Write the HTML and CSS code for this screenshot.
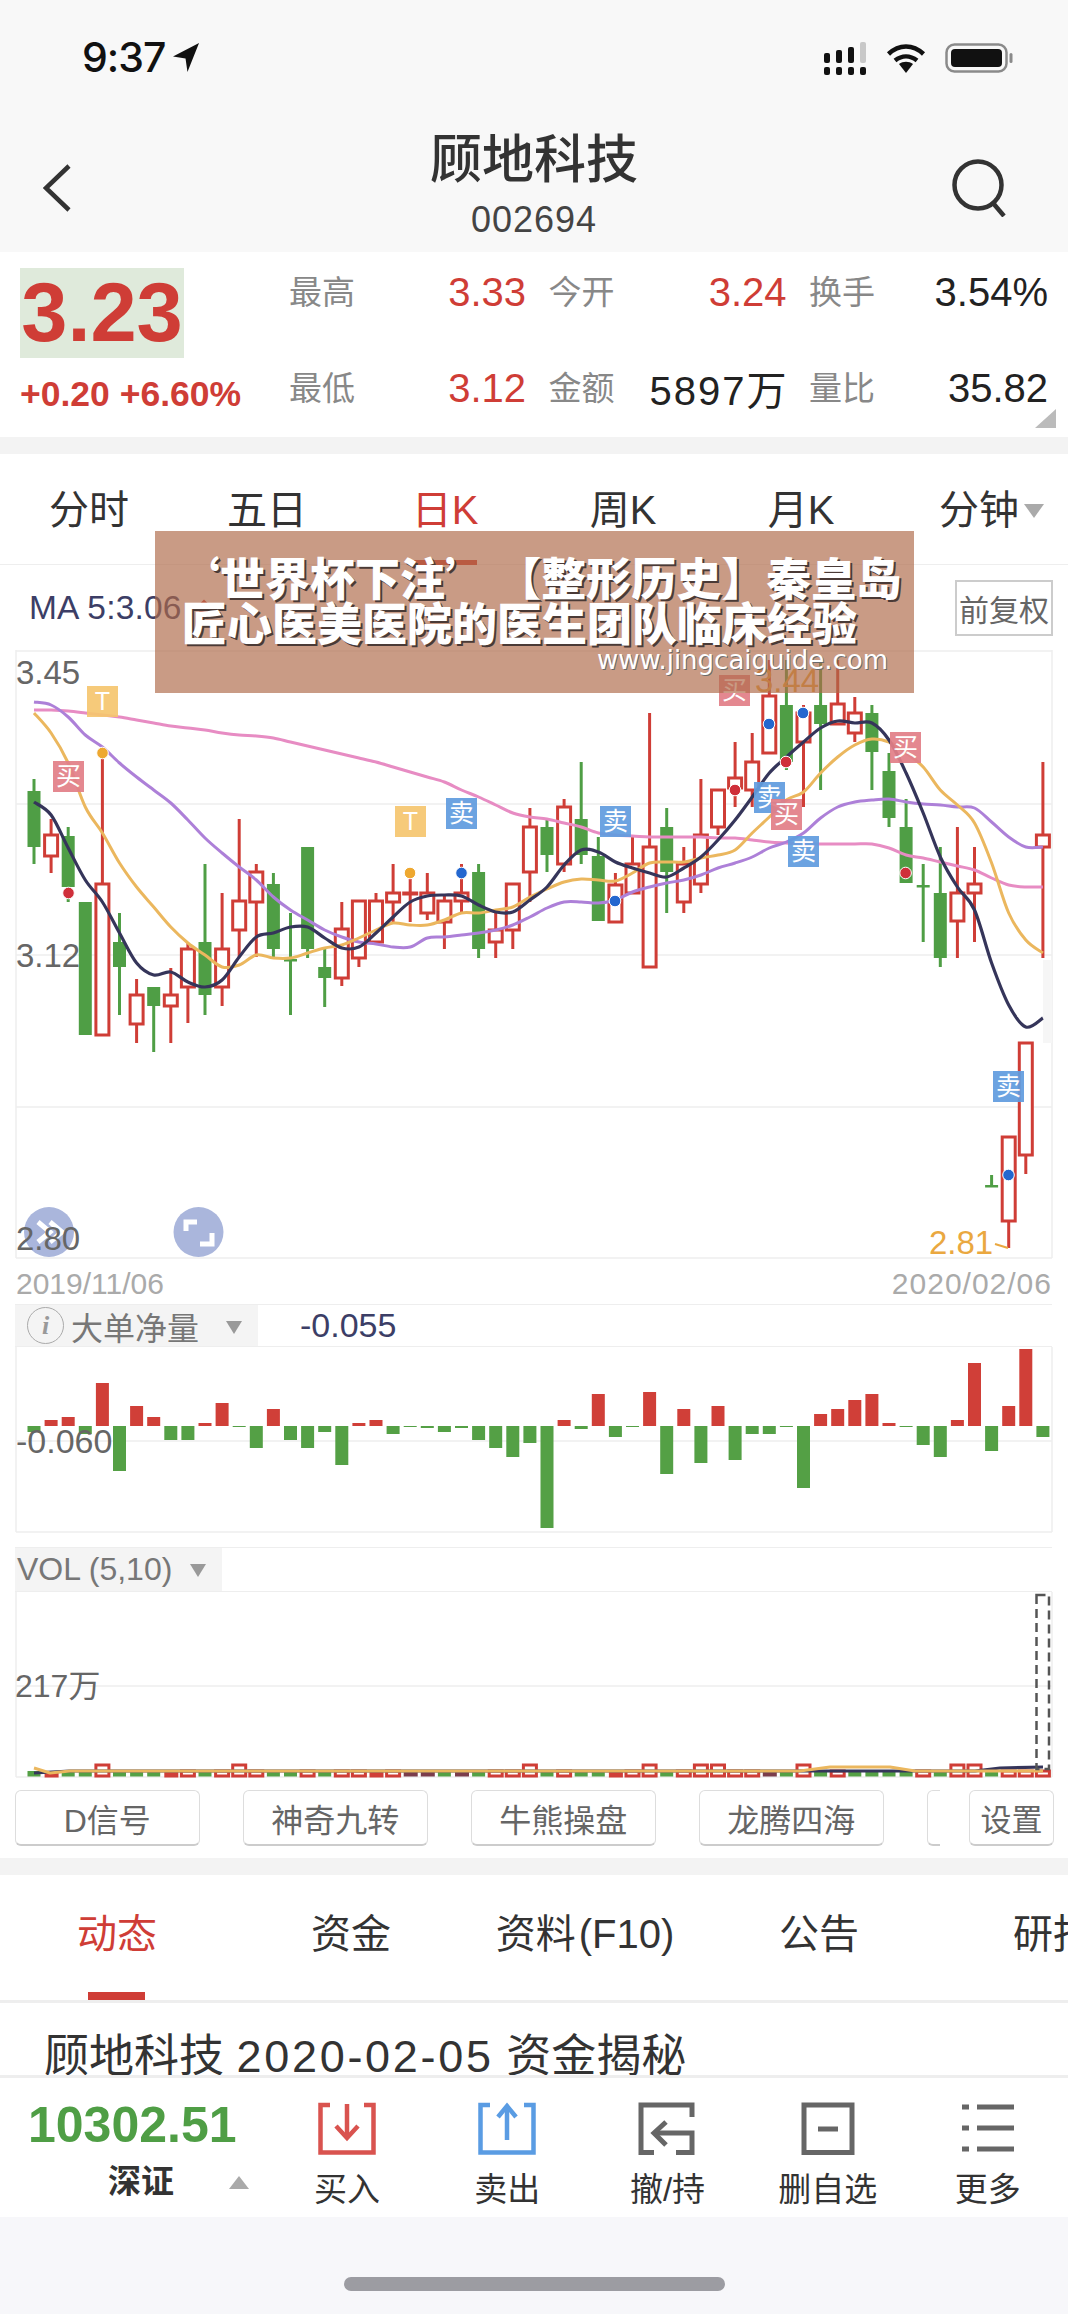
FILE: index.html
```html
<!DOCTYPE html>
<html lang="zh-CN">
<head>
<meta charset="utf-8">
<title>顾地科技</title>
<link rel="stylesheet" href="styles.css">
</head>
<body>
<div class="app">
  <header class="status">
    <div class="clock"><span>9:37</span>
      <svg class="loc" viewBox="0 0 28 30"><path d="M27 0L0 14L13 16L15 30Z"/></svg>
    </div>
    <div class="status-icons">
      <svg class="signal" viewBox="0 0 45 33">
        <g class="sig-on">
          <rect x="0" y="25" width="6" height="8" rx="2"/><rect x="12" y="25" width="6" height="8" rx="2"/><rect x="24" y="25" width="6" height="8" rx="2"/><rect x="36" y="25" width="6" height="8" rx="2"/>
          <rect x="0" y="11" width="6" height="10" rx="2"/><rect x="12" y="8" width="6" height="13" rx="2"/><rect x="24" y="5" width="6" height="16" rx="2"/>
        </g>
        <rect class="sig-off" x="36" y="0" width="6" height="21" rx="2"/>
      </svg>
      <svg class="wifi" viewBox="0 0 40 30">
        <path class="wifi-arc" d="M2.5 11C13 1 27 1 37.500 11"/>
        <path class="wifi-arc" d="M9 17.500C16 12 24 12 31 17.500"/>
        <path class="wifi-dot" d="M13 21C17 18 23 18 27 21L20 30Z"/>
      </svg>
      <svg class="battery" viewBox="0 0 68 30">
        <rect class="batt-shell" x="1.500" y="1.500" width="60" height="27" rx="8"/>
        <rect class="batt-fill" x="6" y="6" width="51" height="18" rx="4"/>
        <rect class="batt-nub" x="64.500" y="10" width="3" height="10" rx="1.500"/>
      </svg>
    </div>
  </header>

  <nav class="nav">
    <svg class="back" viewBox="0 0 28 48"><path d="M26 2L3 24L26 46"/></svg>
    <div class="nav-title">
      <h1>顾地科技</h1>
      <div class="code">002694</div>
    </div>
    <svg class="search" viewBox="0 0 54 58"><circle cx="26" cy="26" r="23.500"/><path d="M41 44L52 57"/></svg>
  </nav>

  <section class="quote">
    <div class="price-col">
      <div class="price-box">3.23</div>
      <div class="change">+0.20 +6.60%</div>
    </div>
    <div class="stats">
      <div class="stat"><span class="stat-label">最高</span><span class="stat-value up">3.33</span></div>
      <div class="stat"><span class="stat-label">今开</span><span class="stat-value up">3.24</span></div>
      <div class="stat"><span class="stat-label">换手</span><span class="stat-value">3.54%</span></div>
      <div class="stat"><span class="stat-label">最低</span><span class="stat-value up">3.12</span></div>
      <div class="stat"><span class="stat-label">金额</span><span class="stat-value spaced">5897万</span></div>
      <div class="stat"><span class="stat-label">量比</span><span class="stat-value">35.82</span></div>
    </div>
    <span class="corner"></span>
  </section>
  <div class="gap"></div>

  <div class="period-tabs">
    <div class="period">分时</div>
    <div class="period">五日</div>
    <div class="period active">日K</div>
    <div class="period">周K</div>
    <div class="period">月K</div>
    <div class="period more">分钟</div>
  </div>

  <div class="ma-row">
    <div class="ma-text">MA 5:3.06<i class="ma-diamond"></i></div>
    <div class="adjust">前复权</div>
  </div>

  <svg class="kline" id="kline" viewBox="0 650 1068 654" width="1068" height="654">
    <g id="kline-grid"></g>
    <g id="kline-candles"></g>
    <g id="kline-lines"></g>
    <g id="kline-marks"></g>
    <text class="axis" x="16" y="684">3.45</text>
    <text class="axis" x="16" y="967">3.12</text>
    <text class="hi-lo" x="755" y="692">3.44</text>
    <text class="hi-lo" x="929" y="1254">2.81</text>
    <path class="lo-tick" d="M995 1244L1008 1248"/>
    <circle class="fab" cx="49" cy="1232" r="25"/>
    <path class="fab-ico" d="M38 1222L50 1232L38 1242M50 1222L62 1232L50 1242"/>
    <circle class="fab" cx="198.500" cy="1232" r="25"/>
    <path class="fab-ico" d="M186 1231V1222H197M212 1233V1244H200"/>
    <text class="axis" x="16" y="1250">2.80</text>
    <text class="date" x="16" y="1294">2019/11/06</text>
    <text class="date end" x="1052" y="1294">2020/02/06</text>
  </svg>

  <div class="pane-head">
    <div class="pane-tab wide">
      <span class="info">i</span><span>大单净量</span><i class="caret"></i>
    </div>
    <span class="pane-value">-0.055</span>
  </div>
  <svg class="flow-bars" id="flow" viewBox="0 1347 1068 200" width="1068" height="200">
    <g id="flow-grid"></g>
    <g id="flow-bars"></g>
    <text class="axis big" x="16" y="1453">-0.060</text>
  </svg>

  <div class="pane-head vol-head">
    <div class="pane-tab narrow"><span>VOL (5,10)</span><i class="caret"></i></div>
  </div>
  <svg class="vol" id="vol" viewBox="0 1592 1068 198" width="1068" height="198">
    <g id="vol-grid"></g>
    <g id="vol-bars"></g>
    <text class="axis small" x="15" y="1697">217万</text>
  </svg>

  <div class="tools">
    <div class="tool-scroll">
      <div class="tool">D信号</div>
      <div class="tool">神奇九转</div>
      <div class="tool">牛熊操盘</div>
      <div class="tool">龙腾四海</div>
      <div class="tool"></div>
    </div>
    <div class="tool settings">设置</div>
  </div>
  <div class="gap"></div>

  <div class="news-tabs">
    <div class="news-tab active">动态</div>
    <div class="news-tab">资金</div>
    <div class="news-tab tight">资料 (F10)</div>
    <div class="news-tab">公告</div>
    <div class="news-tab">研报</div>
  </div>
  <div class="news-title">顾地科技 <span class="news-date">2020-02-05</span> 资金揭秘</div>

  <footer class="footer">
    <div class="index">
      <div class="index-value">10302.51</div>
      <div class="index-name"><span>深证</span><i class="index-up"></i></div>
    </div>
    <div class="action">
      <svg class="act-ico buy" viewBox="0 0 58 53"><path d="M12 3H2.500V50.500H55.500V3H46"/><path d="M29 2V35"/><path d="M18 24L29 36L40 24"/></svg>
      <span>买入</span>
    </div>
    <div class="action">
      <svg class="act-ico sell" viewBox="0 0 58 53"><path d="M12 3H2.500V50.500H55.500V3H46"/><path d="M29 38V5"/><path d="M20 15L29 4L38 15"/></svg>
      <span>卖出</span>
    </div>
    <div class="action">
      <svg class="act-ico hold" viewBox="0 0 58 53"><path d="M54 15V3H3V50.500H16"/><path d="M38 50.500H54V31H17"/><path d="M28 20L16 31L28 43"/></svg>
      <span>撤/持</span>
    </div>
    <div class="action">
      <svg class="act-ico hold" viewBox="0 0 58 53"><rect x="5" y="3" width="48" height="47.500"/><path d="M19 27H39"/></svg>
      <span>删自选</span>
    </div>
    <div class="action">
      <svg class="act-ico hold" viewBox="0 0 58 53"><path d="M3 5H10M18 5H55M3 26H10M18 26H55M3 47H10M18 47H55"/></svg>
      <span>更多</span>
    </div>
  </footer>
  <div class="home"><div class="home-bar"></div></div>

  <aside class="banner">
    <div class="banner-l1">‘世界杯下注’ 【整形历史】秦皇岛</div>
    <div class="banner-l2">匠心医美医院的医生团队临床经验</div>
    <div class="banner-url">www.jingcaiguide.com</div>
  </aside>
</div>
<script src="chart.js"></script>
</body>
</html>
```
FILE: styles.css
```css
* { box-sizing: border-box; }
html, body { margin: 0; padding: 0; background: #fff; }
body {
  font-family: "Liberation Sans", "Noto Sans CJK SC", sans-serif;
  color: #333;
}
.app { position: relative; width: 1068px; height: 2314px; overflow: hidden; display: flex; flex-direction: column; }

/* status bar */
.status { height: 100px; flex: none; background: #f8f8f8; display: flex; justify-content: space-between; align-items: flex-start; padding: 34px 55px 0 82px; }
.clock { display: flex; align-items: center; gap: 8px; font-size: 41px; line-height: 46px; font-weight: 500; color: #111; font-family: "Inter", "Liberation Sans", sans-serif; letter-spacing: -1px; }
.loc { width: 27px; height: 29px; fill: #111; }
.status-icons { display: flex; align-items: center; padding-top: 6px; }
.signal { width: 45px; height: 33px; margin-top: 2px; }
.sig-on { fill: #111; }
.sig-off { fill: #c8c8c8; }
.wifi { width: 40px; height: 30px; margin-left: 17px; }
.wifi-arc { fill: none; stroke: #111; stroke-width: 4.500; }
.wifi-dot { fill: #111; }
.battery { width: 68px; height: 30px; margin-left: 19px; }
.batt-shell { fill: none; stroke: #8a8a8a; stroke-width: 2.500; }
.batt-fill { fill: #111; }
.batt-nub { fill: #8a8a8a; }

/* nav */
.nav { height: 152px; flex: none; background: #f8f8f8; display: grid; grid-template-columns: 1fr auto 1fr; }
.back { width: 28px; height: 48px; margin: 64px 0 0 43px; fill: none; stroke: #333; stroke-width: 4.500; }
.nav-title { text-align: center; padding-top: 31px; }
.nav-title h1 { margin: 0; font-size: 52px; line-height: 58px; font-weight: 500; color: #333; }
.code { margin-top: 11px; font-size: 36px; line-height: 40px; color: #444; letter-spacing: 1px; }
.search { width: 54px; height: 58px; justify-self: end; margin: 59px 62px 0 0; fill: none; stroke: #333; stroke-width: 4.500; }

/* quote */
.quote { position: relative; height: 185px; flex: none; display: flex; background: #fff; }
.price-col { width: 289px; padding: 16px 0 0 20px; flex: none; }
.price-box { width: 164px; height: 90px; background: #dfeadb; color: #cf3d36; font-size: 83px; line-height: 90px; font-weight: 700; text-align: center; white-space: nowrap; }
.change { margin-top: 16px; font-size: 35.500px; line-height: 40px; font-weight: 700; color: #cf3d36; white-space: nowrap; }
.stats { width: 759px; padding-top: 19px; display: grid; grid-template-columns: 237px 238px 239px; column-gap: 22.500px; row-gap: 56px; grid-auto-rows: 40px; }
.stat { display: flex; justify-content: space-between; align-items: center; }
.stat-label { font-size: 33px; color: #888; margin-bottom: 3px; }
.stat-value { font-size: 40px; color: #222; white-space: nowrap; margin-top: 2px; }
.stat-value.up { color: #cf3d36; }
.stat-value.spaced { letter-spacing: 2px; margin-right: -2px; }
.corner { position: absolute; right: 12px; bottom: 9px; width: 21px; height: 19px; background: #bbb; clip-path: polygon(100% 0, 100% 100%, 0 100%); }
.gap { height: 17px; flex: none; background: #f3f3f3; }

/* period tabs */
.period-tabs { height: 111px; flex: none; display: grid; grid-template-columns: repeat(6, 1fr); border-bottom: 1px solid #eee; }
.period { position: relative; display: flex; justify-content: center; align-items: center; padding-bottom: 4px; font-size: 40px; color: #333; }
.period.active { color: #cf3d36; }
.period.active::after { content: ""; position: absolute; left: 50%; bottom: -1px; width: 63px; height: 5px; margin-left: -31px; background: #cf3d36; }
.period.more::after { content: ""; position: absolute; right: 24px; top: 50px; border: 10px solid transparent; border-top: 14px solid #aaa; border-bottom: 0; }

/* MA row */
.ma-row { height: 85px; flex: none; display: flex; justify-content: space-between; align-items: center; padding: 0 15px 0 29px; }
.ma-text { display: flex; align-items: center; font-size: 33.500px; letter-spacing: 0.200px; color: #3c3e66; white-space: nowrap; }
.ma-diamond { width: 12px; height: 12px; margin-left: 16px; background: #cf3d36; transform: rotate(45deg); }
.adjust { width: 98px; height: 56px; border: 2px solid #ccc; display: flex; align-items: center; justify-content: center; font-size: 30px; color: #666; white-space: nowrap; }

/* charts */
.kline, .flow-bars, .vol { display: block; flex: none; }
.grid-line { stroke: #eee; stroke-width: 1.500; }
.axis { font-size: 33px; fill: #666; font-family: "Liberation Sans", "Noto Sans CJK SC", sans-serif; }
.axis.big { font-size: 34px; }
.axis.small { font-size: 32px; }
.date { font-size: 30px; fill: #aaa; }
.date.end { text-anchor: end; letter-spacing: 1px; }
.hi-lo { font-size: 33px; fill: #eaa840; }
.lo-tick { stroke: #eaa840; stroke-width: 2; fill: none; }
.fab { fill: #aab6dc; }
.fab-ico { fill: none; stroke: #fff; stroke-width: 5; }
.wick { stroke-width: 3; }
.wick.r { stroke: #cf3d36; }
.wick.g { stroke: #4f9e45; }
.body-r { fill: #fff; stroke: #cf3d36; stroke-width: 3; }
.body-g { fill: #4f9e45; }
.ma { fill: none; stroke-linejoin: round; }
.ma5 { stroke: #35355a; stroke-width: 3.200; }
.ma10 { stroke: #ebb75e; stroke-width: 3; }
.ma20 { stroke: #ad80d8; stroke-width: 3; }
.ma30 { stroke: #e78cc3; stroke-width: 3; }
.scroll-hint { fill: #f6f6f6; }
.mark { opacity: 0.93; }
.mark-t { fill: #f6c670; }
.mark-b { fill: #e27f88; }
.mark-s { fill: #619ddf; }
.mark-text { fill: #fff; font-size: 25px; text-anchor: middle; }
.dot { stroke: #fff; stroke-width: 1; }
.dot-r { fill: #cf2f3a; }
.dot-b { fill: #2467cf; }
.dot-o { fill: #eea830; }
.bar-r { fill: #d03f38; }
.bar-g { fill: #54a045; }
.vol-fill { fill: #7b3d4b; }
.vol-dash { fill: none; stroke: #555; stroke-width: 2.500; stroke-dasharray: 9 5; }

/* pane headers */
.pane-head { height: 43px; flex: none; margin: 0 16px 0 15px; display: flex; align-items: center; border-top: 1.500px solid #eee; border-bottom: 1.500px solid #eee; }
.vol-head { height: 45px; }
.pane-tab { height: 100%; display: flex; align-items: center; background: #f4f4f4; font-size: 32px; color: #777; white-space: nowrap; position: relative; }
.pane-tab.wide { width: 243px; padding-left: 12px; gap: 7px; }
.pane-tab.narrow { width: 207px; padding-left: 2px; }
.info { width: 37px; height: 37px; border: 1.500px solid #aaa; border-radius: 50%; display: flex; align-items: center; justify-content: center; font: italic 700 26px "Liberation Serif", serif; color: #999; }
.caret { position: absolute; right: 16px; top: 16px; border: 8px solid transparent; border-top: 13px solid #999; border-bottom: 0; }
.pane-value { margin-left: 42px; font-size: 34px; color: #3c3e66; }

/* tool buttons */
.tools { height: 68px; flex: none; display: flex; padding-left: 15px; }
.tool-scroll { width: 925px; display: flex; gap: 43.500px; overflow: hidden; }
.tool { width: 184.500px; flex: none; height: 56px; border: 1.500px solid #ddd; border-bottom: 2.500px solid #ccc; border-radius: 6px; display: flex; align-items: center; justify-content: center; font-size: 32px; color: #666; white-space: nowrap; }
.settings { width: 85px; margin-left: 29px; font-size: 31px; }

/* news */
.news-tabs { height: 128px; flex: none; display: grid; grid-template-columns: repeat(5, 234px); border-bottom: 3px solid #eee; overflow: hidden; }
.news-tab { position: relative; text-align: center; padding-top: 35px; font-size: 40px; line-height: 48px; color: #333; white-space: nowrap; }
.news-tab.tight { word-spacing: -8px; }
.news-tab.active { color: #cf3d36; }
.news-tab.active::after { content: ""; position: absolute; left: 88px; bottom: 0; width: 57px; height: 8px; background: #cf3d36; }
.news-title { height: 72px; flex: none; overflow: hidden; padding: 26px 0 0 44px; font-size: 45px; line-height: 56px; color: #333; white-space: nowrap; }
.news-date { letter-spacing: 2.700px; }

/* footer */
.footer { height: 142px; flex: none; border-top: 3px solid #eee; display: grid; grid-template-columns: 267px repeat(5, 160.200px); background: #fff; }
.index { padding: 17px 0 0 28px; }
.index-value { font-size: 50px; line-height: 60px; font-weight: 700; color: #4f9e45; white-space: nowrap; }
.index-name { margin-top: 7px; padding-left: 80px; display: flex; align-items: center; gap: 55px; font-size: 33px; line-height: 40px; font-weight: 600; color: #333; }
.index-up { border: 10px solid transparent; border-bottom: 13px solid #aaa; border-top: 0; }
.action { display: flex; flex-direction: column; align-items: center; padding-top: 24px; font-size: 33px; line-height: 40px; color: #333; white-space: nowrap; }
.action span { margin-top: 15px; }
.act-ico { width: 58px; height: 53px; fill: none; display: block; }
.buy { stroke: #d9534f; stroke-width: 4.500; }
.sell { stroke: #5a9ce3; stroke-width: 4.500; }
.hold { stroke: #666; stroke-width: 5; }

.home { height: 97px; flex: none; background: #f7f7fa; padding-top: 60px; }
.home-bar { width: 381px; height: 14px; margin: 0 auto; border-radius: 7px; background: #9c9ca2; }

/* watermark banner lying over the chart */
.banner { position: absolute; left: 155px; top: 531px; width: 759px; height: 162px; background: rgba(175, 106, 73, 0.67); color: #fff; }
.banner-l1, .banner-l2 { font-family: "Noto Sans CJK SC", sans-serif; font-weight: 900; font-size: 45px; line-height: 46px; white-space: nowrap; text-shadow: 2px 2px 0 #4a3a36; }
.banner-l1 { padding: 23px 0 0 20px; word-spacing: -4px; }
.banner-l2 { padding-left: 27px; margin-top: -1px; }
.banner-url { padding-left: 442px; font-family: "DejaVu Sans", sans-serif; font-size: 26px; line-height: 30px; white-space: nowrap; text-shadow: 1px 1px 0 #6a6a6a; }
```
FILE: chart.js
```js
// Daily candles: [high, body top, body bottom, low, colour]
var candles = [
  [779,791,847,864,'g'],[819,835,856,873,'r'],[827,836,887,902,'g'],[902,902,1035,1035,'g'],[757,884,1035,1035,'r'],
  [913,942,967,1015,'g'],[979,995,1024,1043,'r'],[987,987,1006,1052,'g'],[968,995,1006,1043,'r'],[943,949,987,1023,'r'],
  [864,942,995,1015,'g'],[893,949,987,1006,'r'],[819,901,930,957,'r'],[864,872,902,957,'r'],[873,884,949,957,'g'],
  [913,959,961,1015,'g'],[847,847,949,958,'g'],[947,967,978,1007,'g'],[902,929,978,986,'r'],[901,901,958,967,'r'],
  [893,901,942,942,'r'],[864,893,902,922,'r'],[876,893,894,922,'r'],[873,893,913,920,'r'],[895,901,922,949,'r'],
  [864,893,901,913,'r'],[864,872,949,958,'g'],[913,930,942,958,'r'],[884,884,930,949,'r'],[808,827,872,902,'r'],
  [818,827,855,872,'g'],[799,807,864,872,'r'],[762,819,855,864,'g'],[837,856,921,921,'g'],[873,885,922,922,'r'],
  [837,864,893,893,'r'],[713,847,967,967,'r'],[808,827,872,913,'g'],[847,864,902,913,'r'],[779,835,884,893,'r'],
  [790,790,827,835,'r'],[742,778,788,807,'r'],[733,762,790,807,'r'],[660,696,753,753,'r'],[660,705,762,770,'g'],
  [705,713,742,807,'r'],[660,705,724,790,'g'],[660,704,724,724,'r'],[697,713,733,742,'r'],[705,713,752,790,'g'],
  [753,771,818,827,'g'],[799,827,883,883,'g'],[864,885,887,942,'g'],[847,893,958,967,'g'],[827,893,921,958,'r'],
  [847,884,893,942,'r'],[1175,1185,1186,1186,'g'],[1137,1137,1221,1248,'r'],[1043,1043,1155,1174,'r'],[762,835,847,958,'r']
];
var ma5 = [802,815,848,880,902,933,963,975,972,982,987,980,957,937,933,927,927,938,948,947,933,917,902,896,895,896,905,912,912,900,887,865,850,852,862,868,873,877,868,857,840,820,797,773,757,742,728,721,723,723,740,773,813,857,887,910,963,1005,1027,1018];
var ma10 = [713,733,763,807,833,863,887,907,927,943,955,967,965,955,958,958,953,948,945,938,930,923,925,925,920,913,913,910,907,897,889,882,879,880,881,873,863,862,862,858,855,850,833,817,800,792,773,757,745,739,742,753,767,790,805,823,863,913,940,953];
var ma20 = [702,705,717,735,747,763,777,790,803,820,838,853,867,880,897,910,920,930,937,942,944,947,947,938,937,935,933,930,925,917,908,902,902,903,900,892,887,883,880,875,868,863,857,848,842,833,818,807,802,800,799,802,804,805,807,808,822,837,847,847];
var ma30 = [710,710,711,713,715,717,720,723,726,728,730,733,735,736,738,742,746,750,754,758,762,767,772,777,782,790,797,805,813,817,819,823,827,833,835,836,837,837,837,837,838,838,840,842,843,844,844,844,844,844,848,855,858,862,866,870,878,885,887,887];
var flow = [-6,6,9,-8,43,-45,20,9,-14,-14,3,23,-1,-22,17,-14,-22,-6,-39,3,6,-8,-1,-2,-6,-2,-14,-22,-31,-17,-102,6,-3,32,-11,-1,34,-48,17,-37,20,-34,-8,-8,-1,-62,12,17,26,32,3,-1,-19,-31,6,63,-25,20,77,-11];
var volKinds = 'gfggtgggfrgrtrggrgrrfrddgdgrrtgrggfrtgrttrrdgtgrggggrgttgrrx';
var marks = [
  ['T',87,686],['买',53,761],['T',395,806],['卖',446,798],['买',719,675],['卖',754,782],
  ['买',771,799],['卖',600,806],['卖',788,836],['买',890,732],['卖',993,1071]
];
var dots = [
  ['r',68.5,893],['o',102.5,753],['o',410,873],['b',461.5,873],['b',769,724],['b',803,713],
  ['r',786,762],['r',735,790],['b',615,901],['r',905.6,873],['b',1008.5,1175]
];

var NS = 'http://www.w3.org/2000/svg';
function el(parent, name, attrs, text) {
  var n = document.createElementNS(NS, name);
  for (var k in attrs) n.setAttribute(k, attrs[k]);
  if (text) n.textContent = text;
  parent.appendChild(n);
  return n;
}
function cx(i) { return 34 + 17.1 * i; }
function smooth(ys, from) {
  var p = ys.map(function (y, i) { return [cx(i + (from || 0)), y]; });
  var d = 'M' + p[0][0] + ' ' + p[0][1];
  for (var i = 0; i < p.length - 1; i++) {
    var a = p[Math.max(i - 1, 0)], b = p[i], c = p[i + 1], e = p[Math.min(i + 2, p.length - 1)];
    d += 'C' + (b[0] + (c[0] - a[0]) / 6).toFixed(1) + ' ' + (b[1] + (c[1] - a[1]) / 6).toFixed(1) + ' ' +
         (c[0] - (e[0] - b[0]) / 6).toFixed(1) + ' ' + (c[1] - (e[1] - b[1]) / 6).toFixed(1) + ' ' +
         c[0].toFixed(1) + ' ' + c[1];
  }
  return d;
}
function hline(g, y) { el(g, 'line', { 'class': 'grid-line', x1: 16, x2: 1052, y1: y, y2: y }); }
function vlines(g, top, bottom) {
  el(g, 'line', { 'class': 'grid-line', x1: 16, x2: 16, y1: top, y2: bottom });
  el(g, 'line', { 'class': 'grid-line', x1: 1052, x2: 1052, y1: top, y2: bottom });
}

// main price pane
var grid = document.getElementById('kline-grid');
[651, 804, 955, 1107, 1258].forEach(function (y) { hline(grid, y); });
vlines(grid, 650, 1258);
el(grid, 'rect', { 'class': 'scroll-hint', x: 1043, y: 960, width: 9, height: 83 });

var cg = document.getElementById('kline-candles');
candles.forEach(function (c, i) {
  var x = cx(i);
  el(cg, 'line', { 'class': 'wick ' + c[4], x1: x, x2: x, y1: c[0], y2: c[3] });
  var h = Math.max(c[2] - c[1], 1);
  if (c[4] === 'r') el(cg, 'rect', { 'class': 'body-r', x: x - 6.5, y: c[1], width: 13, height: h });
  else el(cg, 'rect', { 'class': 'body-g', x: x - 6.5, y: c[1], width: 13, height: Math.max(h, 2.5) });
});

var lg = document.getElementById('kline-lines');
[[ma30, 'ma30'], [ma20, 'ma20'], [ma10, 'ma10'], [ma5, 'ma5']].forEach(function (m) {
  el(lg, 'path', { 'class': 'ma ' + m[1], d: smooth(m[0]) });
});

var mg = document.getElementById('kline-marks');
marks.forEach(function (m) {
  var kind = m[0] === 'T' ? 't' : (m[0] === '买' ? 'b' : 's');
  var g = el(mg, 'g', { 'class': 'mark' });
  el(g, 'rect', { 'class': 'mark-' + kind, x: m[1], y: m[2], width: 31, height: 31 });
  el(g, 'text', { 'class': 'mark-text', x: m[1] + 15.5, y: m[2] + 24 }, m[0]);
});
dots.forEach(function (d) {
  el(mg, 'circle', { 'class': 'dot dot-' + d[0], cx: d[1], cy: d[2], r: 5.8 });
});

// money flow pane
var fg = document.getElementById('flow-grid');
hline(fg, 1441); hline(fg, 1532);
vlines(fg, 1347, 1532);
var fb = document.getElementById('flow-bars');
flow.forEach(function (v, i) {
  var h = Math.abs(v);
  el(fb, 'rect', {
    'class': v > 0 ? 'bar-r' : 'bar-g',
    x: cx(i) - 6.5, y: v > 0 ? 1426 - h : 1426, width: 13, height: h
  });
});

// volume pane
var vg = document.getElementById('vol-grid');
hline(vg, 1686); hline(vg, 1777);
vlines(vg, 1592, 1777);
var vb = document.getElementById('vol-bars');
volKinds.split('').forEach(function (k, i) {
  var x = cx(i) - 6.5;
  if (k === 'g') el(vb, 'rect', { 'class': 'bar-g', x: x, y: 1771, width: 13, height: 5.5 });
  else if (k === 'f') el(vb, 'rect', { 'class': 'bar-r', x: x, y: 1771, width: 14, height: 6.5 });
  else if (k === 'd') el(vb, 'rect', { 'class': 'vol-fill', x: x, y: 1771, width: 14, height: 5.5 });
  else el(vb, 'rect', { 'class': 'body-r', x: x, y: k === 't' ? 1765 : 1771, width: 13, height: k === 't' ? 11 : 5 });
});
el(vb, 'path', { 'class': 'ma ma5', d: 'M34 1773L70 1771L975 1771L1000 1768L1043 1767' });
el(vb, 'path', { 'class': 'ma ma10', d: 'M34 1768L50 1773L70 1771L800 1771L830 1767L890 1767L915 1771L1043 1771' });
el(vb, 'rect', { 'class': 'vol-dash', x: 1036.5, y: 1595, width: 12.5, height: 174 });
```
